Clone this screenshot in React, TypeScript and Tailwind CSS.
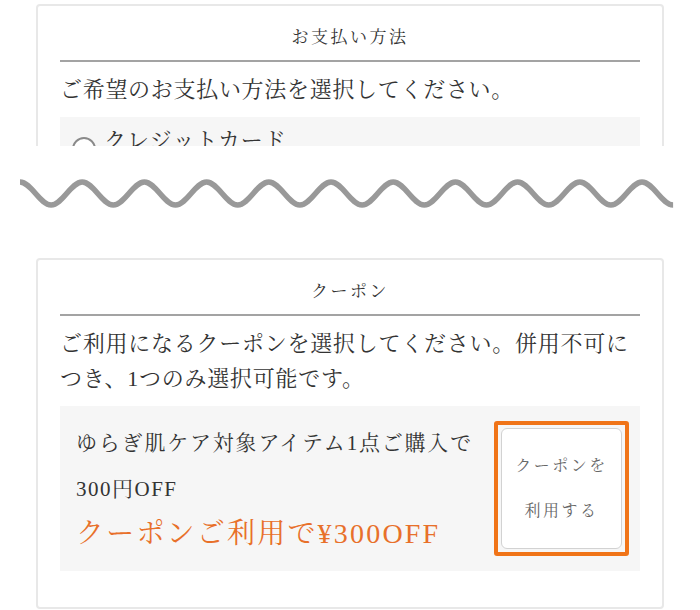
const FONT = 'font-["Liberation_Serif","Noto_Serif_CJK_JP","Noto_Sans_CJK_JP",serif]';

// wave divider between the two screenshots
function Wave() {
  const period = 62.2;
  const half = period / 2;
  const top = 36;
  const bottom = 59;
  let d = `M20 ${top}`;
  for (let i = 0; i < 21; i++) {
    const x0 = 20 + i * half;
    const from = i % 2 === 0 ? top : bottom;
    const to = i % 2 === 0 ? bottom : top;
    d += ` C${(x0 + half * 0.3642).toFixed(2)} ${from} ${(x0 + half * 0.6358).toFixed(2)} ${to} ${(x0 + half).toFixed(2)} ${to}`;
  }
  return (
    <svg width="700" height="112" viewBox="0 0 700 112" className="block">
      <path d={d} fill="none" stroke="#999999" strokeWidth="5.5" />
    </svg>
  );
}

function CardHeader({ title }: { title: string }) {
  return (
    <>
      <div className="pt-[18px] pb-[8px] text-center text-[17px] leading-[28px] tracking-[2.5px] text-[#333]">
        {title}
      </div>
      <div className="h-[2px] bg-[#a3a3a3]" />
    </>
  );
}

export default function App() {
  return (
    <div className={`w-[700px] h-[610px] bg-white overflow-hidden ${FONT}`}>
      {/* Payment method (cut off) */}
      <div className="h-[146px] overflow-hidden pt-[4px]">
        <div className="mx-[36px] rounded-[4px] border-2 border-[#e8e8e8] px-[22px] pb-[36px]">
          <CardHeader title="お支払い方法" />
          <p className="mt-[10px] text-[22px] leading-[35px] tracking-[0.7px] text-[#333]">
            ご希望のお支払い方法を選択してください。
          </p>
          <div className="mt-[10px] bg-[#f6f6f6] px-[12px] pt-[6px] pb-[14px]">
            <label className="flex items-start gap-[8px]">
              <span className="mt-[14px] h-[24px] w-[24px] shrink-0 rounded-full border-2 border-[#8a8a8a] bg-white" />
              <span className="text-[22px] leading-[35px] tracking-[1px] text-[#333]">クレジットカード</span>
            </label>
          </div>
        </div>
      </div>

      <Wave />

      {/* Coupon */}
      <div className="mx-[36px] rounded-[4px] border-2 border-[#e8e8e8] px-[22px] pb-[36px]">
        <CardHeader title="クーポン" />
        <p className="mt-[10px] text-[22px] leading-[35px] tracking-[0.75px] text-[#333]">
          ご利用になるクーポンを選択してください。併用不可につき、1つのみ選択可能です。
        </p>
        <div className="mt-[10px] flex items-center bg-[#f6f6f6] pl-[16px] pr-[11px] pt-[14px] pb-[15px]">
          <div className="flex-1 text-[#333]">
            <div className="text-[21px] leading-[46px] tracking-[1.8px]">ゆらぎ肌ケア対象アイテム1点ご購入で</div>
            <div className="text-[21px] leading-[46px] tracking-[1.5px]">300円OFF</div>
            <div className="text-[28px] leading-[44px] tracking-[2.2px] text-[#e8702a]">クーポンご利用で¥300OFF</div>
          </div>
          <div className="rounded-[3px] border-4 border-[#f07418] p-[3px]">
            <button className="flex h-[121px] w-[121px] flex-col items-center justify-center rounded-[6px] border border-[#d2d2d2] bg-white text-[16px] leading-[45px] tracking-[2.5px] text-[#666]">
              <span>クーポンを</span>
              <span>利用する</span>
            </button>
          </div>
        </div>
      </div>
    </div>
  );
}
